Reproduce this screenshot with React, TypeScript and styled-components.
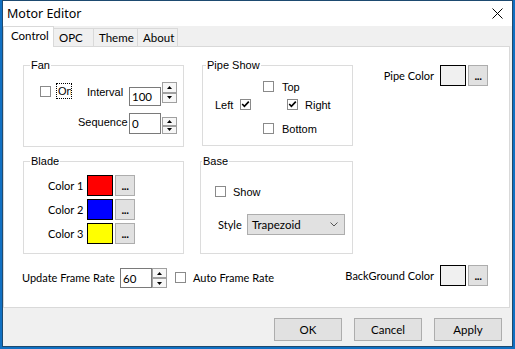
import React from 'react';
import styled, { createGlobalStyle } from 'styled-components';

const UI = `"Lato", "Liberation Sans", Arial, sans-serif`;
const CLASSIC = `"Liberation Sans", Arial, sans-serif`;

const Global = createGlobalStyle`
  html, body { margin: 0; padding: 0; background: #1170c2; }
  body { width: 515px; height: 349px; overflow: hidden; }
  *, *::before, *::after { box-sizing: border-box; }
`;

const Desktop = styled.div`
  width: 515px;
  height: 349px;
  padding-left: 2px;
`;

const Window = styled.div`
  width: 511px;
  height: 347px;
  border: 1px solid #1d4a70;
  background: #f0f0f0;
  display: flex;
  flex-direction: column;
`;

const TitleBar = styled.div`
  height: 25px;
  flex: none;
  background: #fff;
  display: flex;
  align-items: center;
  justify-content: space-between;
  padding: 0 9px 1px 4px;
  font-family: "Noto Sans", ${UI};
  font-size: 12.5px;
  color: #000;
`;

const CloseIcon = () => (
  <svg width="11" height="11" viewBox="0 0 11 11">
    <path d="M0.5 0.5 L10.5 10.5 M10.5 0.5 L0.5 10.5" stroke="#000" strokeWidth="1" fill="none" />
  </svg>
);

const TabStrip = styled.div`
  height: 20px;
  flex: none;
  display: flex;
  align-items: flex-end;
  position: relative;
  z-index: 1;
`;

const Tab = styled.div<{ $active?: boolean; $w: number }>`
  width: ${(p) => p.$w}px;
  height: ${(p) => (p.$active ? 21 : 18)}px;
  margin-bottom: ${(p) => (p.$active ? -1 : 0)}px;
  margin-left: -1px;
  &:first-child { margin-left: 0; }
  border: 1px solid #d9d9d9;
  border-bottom: ${(p) => (p.$active ? 'none' : '0')};
  background: ${(p) => (p.$active ? '#fff' : '#f0f0f0')};
  position: relative;
  z-index: ${(p) => (p.$active ? 2 : 1)};
  display: flex;
  align-items: center;
  padding: 0 0 ${(p) => (p.$active ? 3 : 0)}px ${(p) => (p.$active ? 7 : 5)}px;
  font-family: ${UI};
  font-size: 11.5px;
  color: #000;
`;

const Panel = styled.div`
  height: 262px;
  flex: none;
  margin-right: 2px;
  border: 1px solid #d9d9d9;
  background: #fff;
  padding: 18px 21px 0 19px;
  display: flex;
  flex-direction: column;
`;

const Row = styled.div<{ $mt?: number }>`
  display: flex;
  align-items: flex-start;
  margin-top: ${(p) => p.$mt ?? 0}px;
`;

const GroupBox = styled.div<{ $w: number; $h: number; $ml?: number }>`
  position: relative;
  width: ${(p) => p.$w}px;
  height: ${(p) => p.$h}px;
  margin-left: ${(p) => p.$ml ?? 0}px;
  border: 1px solid #dcdcdc;
  flex: none;
`;

const Legend = styled.span<{ $left: number }>`
  position: absolute;
  top: -7px;
  left: ${(p) => p.$left}px;
  padding: 0 1px;
  background: #fff;
  line-height: 13px;
  font-family: ${CLASSIC};
  font-size: 11px;
  color: #000;
`;

const Text = styled.span<{ $font?: 'ui' | 'classic'; $w?: number; $align?: string }>`
  font-family: ${(p) => (p.$font === 'ui' ? UI : CLASSIC)};
  font-size: 11px;
  color: #000;
  white-space: nowrap;
  ${(p) => (p.$w ? `width: ${p.$w}px; flex: none;` : '')}
  text-align: ${(p) => p.$align ?? 'left'};
`;

const Box = styled.span`
  width: 11px;
  height: 11px;
  flex: none;
  border: 1px solid #8a8a8a;
  background: #fff;
  display: inline-flex;
  align-items: center;
  justify-content: center;
`;

const CheckBox = ({ checked }: { checked?: boolean }) => (
  <Box>
    {checked && (
      <svg width="9" height="9" viewBox="0 0 9 9">
        <polyline points="1.2,4 3.4,6.4 7.8,1.6" fill="none" stroke="#000" strokeWidth="1.6" />
      </svg>
    )}
  </Box>
);

const CheckItem = styled.div<{ $gap?: number }>`
  display: flex;
  align-items: center;
  gap: ${(p) => p.$gap ?? 8}px;
  height: 11px;
`;

const FocusLabel = styled.span`
  width: 16px;
  height: 16px;
  margin-left: 5px;
  border: 1px dotted #000;
  overflow: hidden;
  display: flex;
  align-items: center;
  padding-left: 1px;
  font-family: ${CLASSIC};
  font-size: 11px;
  flex: none;
`;

const Edit = styled.div<{ $w: number; $h: number }>`
  width: ${(p) => p.$w}px;
  height: ${(p) => p.$h}px;
  border: 1px solid #7a7a7a;
  background: #fff;
  display: flex;
  align-items: center;
  padding-left: 2px;
  font-family: ${UI};
  font-size: 11.5px;
  flex: none;
`;

const SpinCol = styled.div<{ $mt: number; $ml: number; $h: number }>`
  display: flex;
  flex-direction: column;
  width: 15px;
  height: ${(p) => p.$h}px;
  margin-top: ${(p) => p.$mt}px;
  margin-left: ${(p) => p.$ml}px;
  flex: none;
`;

const SpinBtn = styled.div`
  flex: 1;
  border: 1px solid #a0a0a0;
  background: #f7f7f7;
  display: flex;
  align-items: center;
  justify-content: center;
`;

const Arrow = ({ down }: { down?: boolean }) => (
  <svg width="5" height="3" viewBox="0 0 5 3">
    <polygon points={down ? '0,0 5,0 2.5,3' : '0,3 5,3 2.5,0'} fill="#000" />
  </svg>
);

const NumField = styled.div`
  display: flex;
  align-items: flex-start;
`;

const Spin = ({ mt, ml, h }: { mt: number; ml: number; h: number }) => (
  <SpinCol $mt={mt} $ml={ml} $h={h}>
    <SpinBtn><Arrow /></SpinBtn>
    <SpinBtn><Arrow down /></SpinBtn>
  </SpinCol>
);

const Swatch = styled.div<{ $c: string }>`
  width: 26px;
  height: 21px;
  border: 1px solid #000;
  background: ${(p) => p.$c};
  flex: none;
`;

const DotsButton = styled.div`
  width: 20px;
  height: 21px;
  margin-left: 2px;
  border: 1px solid #adadad;
  background: #e1e1e1;
  display: flex;
  align-items: flex-end;
  justify-content: center;
  padding-bottom: 4px;
  font-family: ${CLASSIC};
  font-size: 10px;
  font-weight: bold;
  line-height: 8px;
  letter-spacing: -0.5px;
  flex: none;
`;

const ColorField = styled.div<{ $ml?: string }>`
  display: flex;
  align-items: center;
  margin-left: ${(p) => p.$ml ?? '0'};
`;

const FanBody = styled.div`
  display: flex;
  flex-direction: column;
  padding: 16px 6px 0 16px;
`;

const FanRow = styled.div<{ $h: number }>`
  display: flex;
  align-items: flex-start;
  height: ${(p) => p.$h}px;
`;

const Push = styled.div<{ $mt?: number; $auto?: boolean }>`
  margin-left: ${(p) => (p.$auto === false ? '0' : 'auto')};
  display: flex;
  align-items: flex-start;
  margin-top: ${(p) => p.$mt ?? 0}px;
`;

const PipeGrid = styled.div`
  display: grid;
  grid-template-columns: 48px 24px 1fr;
  grid-template-rows: 18px 24px 11px;
  padding: 15px 0 0 12px;
  align-items: start;
`;

const Cell = styled.div<{ $col: string; $row: number }>`
  grid-column: ${(p) => p.$col};
  grid-row: ${(p) => p.$row};
`;

const BladeBody = styled.div`
  display: flex;
  flex-direction: column;
  gap: 3px;
  padding: 13px 0 0 24px;
`;

const BaseBody = styled.div`
  display: flex;
  flex-direction: column;
  padding: 24px 0 0 14px;
`;

const StyleRow = styled.div`
  display: flex;
  align-items: center;
  margin: 17px 0 0 3px;
  gap: 3px;
`;

const Combo = styled.div`
  width: 98px;
  height: 21px;
  border: 1px solid #adadad;
  background: #e1e1e1;
  display: flex;
  align-items: center;
  justify-content: space-between;
  padding: 0 6px 0 4px;
  font-family: ${UI};
  font-size: 11.5px;
`;

const Chevron = () => (
  <svg width="8" height="5" viewBox="0 0 8 5">
    <polyline points="0.5,0.5 4,4 7.5,0.5" fill="none" stroke="#555" strokeWidth="1" />
  </svg>
);

const BottomLeft = styled.div`
  display: flex;
  align-items: flex-start;
  margin: 3px 0 0 -1px;
`;

const Footer = styled.div`
  flex: 1;
  display: flex;
  justify-content: flex-end;
  align-items: flex-start;
  gap: 12px;
  padding: 10px 10px 0 0;
`;

const Button = styled.button`
  width: 68px;
  height: 23px;
  border: 1px solid #adadad;
  background: #e1e1e1;
  font-family: ${UI};
  font-size: 11.5px;
  color: #000;
  padding: 0;
`;

export default function App() {
  return (
    <>
      <Global />
      <Desktop>
        <Window>
          <TitleBar>
            <span>Motor Editor</span>
            <CloseIcon />
          </TitleBar>
          <TabStrip>
            <Tab $active $w={51}>Control</Tab>
            <Tab $w={41}>OPC</Tab>
            <Tab $w={45}>Theme</Tab>
            <Tab $w={41}>About</Tab>
          </TabStrip>
          <Panel>
            <Row>
              <GroupBox $w={161} $h={82}>
                <Legend $left={6}>Fan</Legend>
                <FanBody>
                  <FanRow $h={31}>
                    <Push $auto={false} $mt={4}>
                      <CheckBox />
                    </Push>
                    <Push $auto={false} $mt={1}>
                      <FocusLabel>On</FocusLabel>
                    </Push>
                    <Push>
                      <Text $w={38} style={{ marginTop: 4 }}>Interval</Text>
                      <NumField style={{ marginLeft: 4 }}>
                        <Edit $w={32} $h={19} style={{ marginTop: 5 }}>100</Edit>
                        <Spin mt={0} ml={1} h={21} />
                      </NumField>
                    </Push>
                  </FanRow>
                  <FanRow $h={21}>
                    <Push>
                      <Text $w={47} $align="right" style={{ marginTop: 3 }}>Sequence</Text>
                      <NumField style={{ marginLeft: 4 }}>
                        <Edit $w={32} $h={21}>0</Edit>
                        <Spin mt={4} ml={1} h={17} />
                      </NumField>
                    </Push>
                  </FanRow>
                </FanBody>
              </GroupBox>
              <GroupBox $w={151} $h={81} $ml={18}>
                <Legend $left={3}>Pipe Show</Legend>
                <PipeGrid>
                  <Cell $col="2 / 4" $row={1}>
                    <CheckItem><CheckBox /><Text>Top</Text></CheckItem>
                  </Cell>
                  <Cell $col="1" $row={2}>
                    <CheckItem $gap={7}><Text $w={18}>Left</Text><CheckBox checked /></CheckItem>
                  </Cell>
                  <Cell $col="3" $row={2}>
                    <CheckItem $gap={7}><CheckBox checked /><Text>Right</Text></CheckItem>
                  </Cell>
                  <Cell $col="2 / 4" $row={3}>
                    <CheckItem><CheckBox /><Text>Bottom</Text></CheckItem>
                  </Cell>
                </PipeGrid>
              </GroupBox>
              <ColorField $ml="auto">
                <Text $font="ui" style={{ marginRight: 6 }}>Pipe Color</Text>
                <Swatch $c="#f0f0f0" />
                <DotsButton>...</DotsButton>
              </ColorField>
            </Row>
            <Row $mt={14}>
              <GroupBox $w={161} $h={93}>
                <Legend $left={6}>Blade</Legend>
                <BladeBody>
                  <ColorField>
                    <Text $font="ui" $w={39}>Color 1</Text>
                    <Swatch $c="#ff0000" />
                    <DotsButton>...</DotsButton>
                  </ColorField>
                  <ColorField>
                    <Text $font="ui" $w={39}>Color 2</Text>
                    <Swatch $c="#0000ff" />
                    <DotsButton>...</DotsButton>
                  </ColorField>
                  <ColorField>
                    <Text $font="ui" $w={39}>Color 3</Text>
                    <Swatch $c="#ffff00" />
                    <DotsButton>...</DotsButton>
                  </ColorField>
                </BladeBody>
              </GroupBox>
              <GroupBox $w={153} $h={93} $ml={16}>
                <Legend $left={1}>Base</Legend>
                <BaseBody>
                  <CheckItem $gap={7}><CheckBox /><Text>Show</Text></CheckItem>
                  <StyleRow>
                    <Text $font="ui" $w={26}>Style</Text>
                    <Combo>
                      <span>Trapezoid</span>
                      <Chevron />
                    </Combo>
                  </StyleRow>
                </BaseBody>
              </GroupBox>
            </Row>
            <Row $mt={11}>
              <BottomLeft>
                <Text $font="ui" $w={98} style={{ marginTop: 3 }}>Update Frame Rate</Text>
                <NumField>
                  <Edit $w={32} $h={20}>60</Edit>
                  <Spin mt={0} ml={0} h={20} />
                </NumField>
                <CheckItem $gap={7} style={{ marginLeft: 8, marginTop: 4 }}>
                  <CheckBox />
                  <Text $font="ui">Auto Frame Rate</Text>
                </CheckItem>
              </BottomLeft>
              <ColorField $ml="auto">
                <Text $font="ui" style={{ marginRight: 6 }}>BackGround Color</Text>
                <Swatch $c="#f0f0f0" />
                <DotsButton>...</DotsButton>
              </ColorField>
            </Row>
          </Panel>
          <Footer>
            <Button>OK</Button>
            <Button>Cancel</Button>
            <Button>Apply</Button>
          </Footer>
        </Window>
      </Desktop>
    </>
  );
}
